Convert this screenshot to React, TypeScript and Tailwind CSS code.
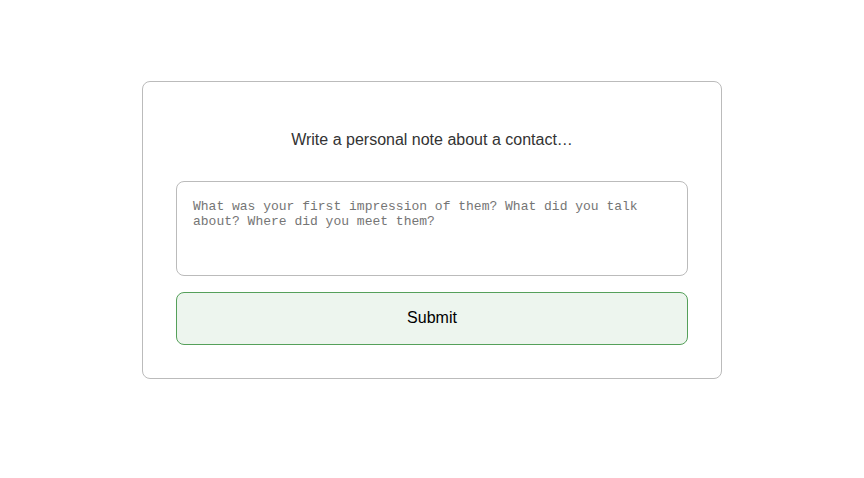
export default function App() {
  return (
    <main className="px-4 pt-[81px] pb-24 font-['Liberation_Sans',Arial,sans-serif]">
      <form
        className="mx-auto flex max-w-[580px] flex-col rounded-lg border border-[#bbbbbb] bg-white p-[33px] pt-12"
        onSubmit={(event) => event.preventDefault()}
      >
        <label htmlFor="note" className="mb-8 text-center text-base leading-[19px] text-[#333333]">
          Write a personal note about a contact…
        </label>
        <textarea
          id="note"
          placeholder="What was your first impression of them? What did you talk about? Where did you meet them?"
          className="mb-4 h-[95px] w-full resize-none rounded-lg border border-[#bbbbbb] bg-white px-4 py-[17px] font-['Liberation_Mono',monospace] text-[13px] leading-[15px] text-[#333333] placeholder:text-[#757575]"
        />
        <button
          type="submit"
          className="h-[53px] w-full cursor-pointer rounded-lg border border-[#55a05a] bg-[#edf5ee] pb-[2px] text-base text-black"
        >
          Submit
        </button>
      </form>
    </main>
  );
}
